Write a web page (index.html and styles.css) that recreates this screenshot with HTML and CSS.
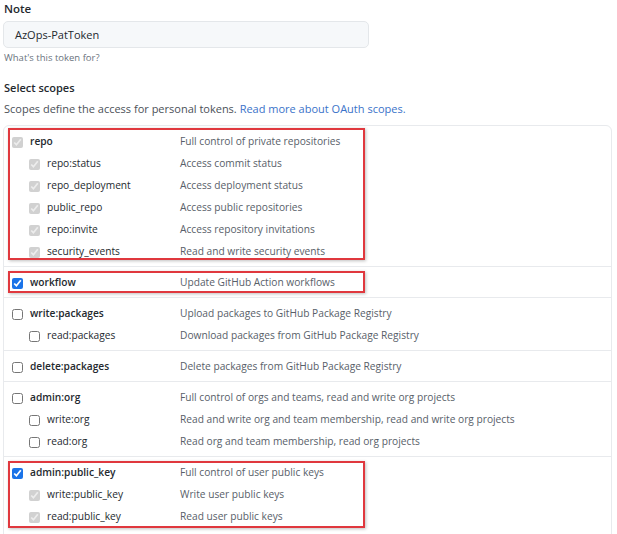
FILE: index.html
```html
<!DOCTYPE html>
<html>
<head>
<meta charset="utf-8">
<link rel="stylesheet" href="styles.css">
</head>
<body>
<div class="page">
  <div class="note-label">Note</div>
  <div class="note-input">AzOps-PatToken</div>
  <div class="note-hint">What's this token for?</div>
  <div class="scopes-title">Select scopes</div>
  <div class="scopes-desc">Scopes define the access for personal tokens. <span class="link">Read more about OAuth scopes.</span></div>

  <div class="scope-box">
    <div class="group">
      <div class="row top"><input type="checkbox" checked disabled><span class="name">repo</span><span class="desc">Full control of private repositories</span></div>
      <div class="row sub"><input type="checkbox" checked disabled><span class="name">repo:status</span><span class="desc">Access commit status</span></div>
      <div class="row sub"><input type="checkbox" checked disabled><span class="name">repo_deployment</span><span class="desc">Access deployment status</span></div>
      <div class="row sub"><input type="checkbox" checked disabled><span class="name">public_repo</span><span class="desc">Access public repositories</span></div>
      <div class="row sub"><input type="checkbox" checked disabled><span class="name">repo:invite</span><span class="desc">Access repository invitations</span></div>
      <div class="row sub"><input type="checkbox" checked disabled><span class="name">security_events</span><span class="desc">Read and write security events</span></div>
      <div class="mark mark-repo"></div>
    </div>
    <div class="group">
      <div class="row top"><input type="checkbox" checked><span class="name">workflow</span><span class="desc">Update GitHub Action workflows</span></div>
      <div class="mark mark-workflow"></div>
    </div>
    <div class="group">
      <div class="row top"><input type="checkbox"><span class="name">write:packages</span><span class="desc">Upload packages to GitHub Package Registry</span></div>
      <div class="row sub"><input type="checkbox"><span class="name">read:packages</span><span class="desc">Download packages from GitHub Package Registry</span></div>
    </div>
    <div class="group">
      <div class="row top"><input type="checkbox"><span class="name">delete:packages</span><span class="desc">Delete packages from GitHub Package Registry</span></div>
    </div>
    <div class="group">
      <div class="row top"><input type="checkbox"><span class="name">admin:org</span><span class="desc">Full control of orgs and teams, read and write org projects</span></div>
      <div class="row sub"><input type="checkbox"><span class="name">write:org</span><span class="desc">Read and write org and team membership, read and write org projects</span></div>
      <div class="row sub"><input type="checkbox"><span class="name">read:org</span><span class="desc">Read org and team membership, read org projects</span></div>
    </div>
    <div class="group last">
      <div class="row top"><input type="checkbox" checked><span class="name">admin:public_key</span><span class="desc">Full control of user public keys</span></div>
      <div class="row sub"><input type="checkbox" checked disabled><span class="name">write:public_key</span><span class="desc">Write user public keys</span></div>
      <div class="row sub"><input type="checkbox" checked disabled><span class="name">read:public_key</span><span class="desc">Read user public keys</span></div>
      <div class="mark mark-key"></div>
    </div>
  </div>
</div>
</body>
</html>
```
FILE: styles.css
```css
html, body {
  margin: 0;
  padding: 0;
  background: #ffffff;
}
.page {
  padding: 0 5px 0 3px;
  font-family: "Open Sans", "Noto Sans", sans-serif;
  font-size: 11px;
  color: #24292e;
  overflow: hidden;
  height: 534px;
}
.note-label {
  font-weight: 600;
  font-size: 11.5px;
  line-height: 16px;
  padding: 1px 0 0 1px;
}
.note-input {
  margin-top: 4px;
  width: 342px;
  height: 25px;
  line-height: 25px;
  padding: 0 11px;
  border: 1px solid #e4e7ea;
  border-radius: 5px;
  background: #f6f8fa;
  font-size: 11px;
  box-sizing: content-box;
}
.note-hint {
  margin-top: 4px;
  font-size: 9.5px;
  color: #6a737d;
  line-height: 12px;
  padding-left: 1px;
}
.scopes-title {
  margin-top: 16px;
  font-weight: 600;
  font-size: 11px;
  line-height: 16px;
  padding-left: 1px;
}
.scopes-desc {
  margin-top: 5px;
  font-size: 11px;
  line-height: 16px;
  color: #4b5158;
  padding-left: 1px;
}
.link {
  color: #3a72c9;
}
.scope-box {
  margin-top: 8px;
  border: 1px solid #e8eaed;
  border-radius: 6px;
  font-size: 10.2px;
}
.group {
  position: relative;
  padding: 5px 0 3px;
  border-bottom: 1px solid #e8eaed;
}
.group.last {
  padding-bottom: 20px;
}
.row {
  display: flex;
  align-items: center;
  height: 22px;
}
.row input {
  margin: 0 7px 0 0;
  width: 11px;
  height: 11px;
  accent-color: #1a73e8;
  flex: none;
}
.row.top {
  padding-left: 8px;
}
.row.sub {
  padding-left: 25px;
}
.name {
  color: #24292e;
  flex: none;
  line-height: 14px;
  padding-bottom: 2px;
}
.desc {
  color: #586069;
  white-space: nowrap;
  line-height: 14px;
  padding-bottom: 2px;
}
.row.top .name {
  font-weight: 600;
  width: 150px;
}
.row.sub .name {
  width: 133px;
}
.mark {
  position: absolute;
  left: 4px;
  width: 353px;
  border: 2px solid #e0383e;
  box-shadow: 1px 1px 3px rgba(0, 0, 0, 0.25);
  pointer-events: none;
}
.mark-repo {
  top: 2px;
  height: 128px;
}
.mark-workflow {
  top: 4px;
  height: 18px;
}
.mark-key {
  top: 4px;
  height: 63px;
}
```
